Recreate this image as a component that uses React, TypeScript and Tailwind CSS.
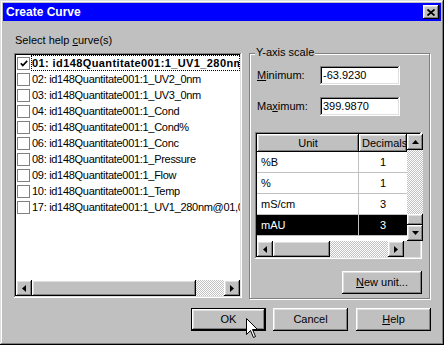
import React from "react";

const raised =
  "bg-[#c0c0c0] shadow-[inset_-1px_-1px_#000,inset_1px_1px_#fff,inset_-2px_-2px_#808080,inset_2px_2px_#dfdfdf]";
const sunken =
  "shadow-[inset_-1px_-1px_#fff,inset_1px_1px_#808080,inset_-2px_-2px_#dfdfdf,inset_2px_2px_#000]";
const dither =
  "bg-[image:repeating-conic-gradient(#fff_0%_25%,#c0c0c0_0%_50%)] bg-[length:2px_2px]";

const curves = [
  "01: id148Quantitate001:1_UV1_280nm",
  "02: id148Quantitate001:1_UV2_0nm",
  "03: id148Quantitate001:1_UV3_0nm",
  "04: id148Quantitate001:1_Cond",
  "05: id148Quantitate001:1_Cond%",
  "06: id148Quantitate001:1_Conc",
  "08: id148Quantitate001:1_Pressure",
  "09: id148Quantitate001:1_Flow",
  "10: id148Quantitate001:1_Temp",
  "17: id148Quantitate001:1_UV1_280nm@01,00",
];

const units = [
  { unit: "%B", dec: "1" },
  { unit: "%", dec: "1" },
  { unit: "mS/cm", dec: "3" },
  { unit: "mAU", dec: "3", selected: true },
];

const Arrow = ({ dir }: { dir: "up" | "down" | "left" | "right" }) => {
  const vertical = dir === "up" || dir === "down";
  const pts = {
    up: "0,4 3.5,0 7,4",
    down: "0,0 3.5,4 7,0",
    left: "4,0 0,3.5 4,7",
    right: "0,0 4,3.5 0,7",
  }[dir];
  return (
    <svg width={vertical ? 7 : 4} height={vertical ? 4 : 7} viewBox={vertical ? "0 0 7 4" : "0 0 4 7"}>
      <polygon points={pts} fill="#000" />
    </svg>
  );
};

const ScrollBtn = ({ dir }: { dir: "up" | "down" | "left" | "right" }) => (
  <div className={`w-[16px] h-[16px] shrink-0 flex items-center justify-center ${raised}`}>
    <Arrow dir={dir} />
  </div>
);

const Button = ({
  children,
  isDefault,
  className = "",
}: {
  children?: React.ReactNode;
  isDefault?: boolean;
  className?: string;
}) =>
  isDefault ? (
    <div className={`w-[75px] h-[23px] border border-black ${className}`}>
      <div className={`w-full h-full flex items-center justify-center ${raised}`}>{children}</div>
    </div>
  ) : (
    <div className={`w-[75px] h-[23px] flex items-center justify-center ${raised} ${className}`}>
      {children}
    </div>
  );

function CurveList() {
  return (
    <div className={`mt-[6px] h-[245px] bg-white p-[2px] flex flex-col ${sunken}`}>
      <div className="flex-1 overflow-hidden">
        {curves.map((c, i) => (
          <div key={i} className="h-[16px] flex items-center">
            <div className="ml-[1px] w-[13px] h-[13px] shrink-0 border border-[#808080] bg-white flex items-center justify-center">
              {i === 0 && (
                <svg width="8" height="7" viewBox="0 0 8 7">
                  <polyline points="0.8,3.2 2.8,5.5 7.2,0.8" fill="none" stroke="#000" strokeWidth="1.7" />
                </svg>
              )}
            </div>
            {/* focused item gets the dotted rect and bold face */}
            <div
              className={`ml-[1px] flex-1 min-w-0 h-[16px] flex items-center whitespace-nowrap overflow-hidden ${
                i === 0
                  ? "border border-dotted border-black font-bold tracking-[0.4px]"
                  : "pl-[1px] tracking-[-0.3px]"
              }`}
            >
              {c}
            </div>
          </div>
        ))}
      </div>
      <div className="h-[16px] flex">
        <ScrollBtn dir="left" />
        <div className={`w-[164px] ${raised}`} />
        <div className={`flex-1 ${dither}`} />
        <ScrollBtn dir="right" />
      </div>
    </div>
  );
}

function UnitGrid() {
  return (
    <div className={`mt-[16px] w-[167px] h-[127px] bg-white p-[2px] flex flex-col ${sunken}`}>
      <div className="flex-1 flex min-h-0">
        <div className="flex-1 flex flex-col">
          <div className="h-[18px] flex">
            <div className={`w-[102px] flex items-center justify-center ${raised}`}>Unit</div>
            <div className={`flex-1 flex items-center pl-[3px] overflow-hidden whitespace-nowrap ${raised}`}>
              Decimals
            </div>
          </div>
          {units.map((u) => (
            <div
              key={u.unit}
              className={`h-[21px] flex border-b border-[#c0c0c0] ${u.selected ? "bg-black text-white" : ""}`}
            >
              <div className="w-[102px] flex items-center pl-[4px] border-r border-[#c0c0c0]">{u.unit}</div>
              <div className="flex-1 flex items-center justify-center">{u.dec}</div>
            </div>
          ))}
        </div>
        <div className="w-[16px] flex flex-col">
          <ScrollBtn dir="up" />
          <div className={`flex-1 ${dither}`} />
          <div className={`h-[11px] ${raised}`} />
          <ScrollBtn dir="down" />
        </div>
      </div>
      <div className="h-[16px] flex">
        <ScrollBtn dir="left" />
        <div className={`w-[57px] ${raised}`} />
        <div className={`flex-1 ${dither}`} />
        <ScrollBtn dir="right" />
        <div className="w-[16px] bg-[#c0c0c0]" />
      </div>
    </div>
  );
}

function ScaleGroup() {
  return (
    <div className="relative ml-[7px] mt-[32px] w-[181px] h-[246px] border border-[#808080] shadow-[inset_1px_1px_#fff,1px_1px_#fff] flex flex-col pl-[5px] pr-[7px] pt-[12px]">
      <div className="absolute top-[-8px] left-[5px] px-[1px] bg-[#c0c0c0]">Y-axis scale</div>
      <div className="flex items-center h-[19px]">
        <div className="w-[65px] pl-[2px]">
          <u>M</u>inimum:
        </div>
        <div className={`w-[80px] h-[19px] bg-white pl-[3px] flex items-center ${sunken}`}>-63.9230</div>
      </div>
      <div className="mt-[12px] flex items-center h-[19px]">
        <div className="w-[65px] pl-[2px]">
          Ma<u>x</u>imum:
        </div>
        <div className={`w-[80px] h-[19px] bg-white pl-[3px] flex items-center ${sunken}`}>399.9870</div>
      </div>
      <UnitGrid />
      <div className={`mt-[12px] self-end w-[80px] h-[23px] flex items-center justify-center ${raised}`}>
        <span>
          <u>N</u>ew unit...
        </span>
      </div>
    </div>
  );
}

export default function App() {
  return (
    <div className="relative w-[444px] h-[345px] bg-[#c0c0c0] p-[3px] font-['Liberation_Sans',Arial,sans-serif] text-[11px] leading-[13px] text-black select-none shadow-[inset_-1px_-1px_#000,inset_1px_1px_#dfdfdf,inset_-2px_-2px_#808080,inset_2px_2px_#fff]">
      <div className="h-[18px] bg-[#0000ff] flex items-center pl-[3px] pr-[2px]">
        <span className="flex-1 text-white font-bold text-[12px]">Create Curve</span>
        <div className={`w-[16px] h-[14px] flex items-center justify-center ${raised}`}>
          <svg width="8" height="7" viewBox="0 0 8 7">
            <path d="M0.5 0.5L7.5 6.5M7.5 0.5L0.5 6.5" stroke="#000" strokeWidth="1.8" />
          </svg>
        </div>
      </div>

      <div className="flex pl-[11px]">
        <div className="w-[228px] flex flex-col">
          <div className="mt-[13px] h-[13px] pl-[1px]">
            Select help <u>c</u>urve(s)
          </div>
          <CurveList />
        </div>
        <ScaleGroup />
      </div>

      <div className="mt-[9px] flex justify-end pr-[10px]">
        <Button isDefault>OK</Button>
        <Button className="ml-[7px]">Cancel</Button>
        <Button className="ml-[8px]">
          <span>
            <u>H</u>elp
          </span>
        </Button>
      </div>

      <svg
        className="absolute left-[246px] top-[318px]"
        width="13"
        height="21"
        viewBox="0 0 13 21"
      >
        <path
          d="M0.5 0.5L0.5 16.5L4.5 12.5L7.5 19.5L9.5 18.5L6.5 11.5L11.5 11.5Z"
          fill="#fff"
          stroke="#000"
          strokeWidth="1"
        />
      </svg>
    </div>
  );
}
